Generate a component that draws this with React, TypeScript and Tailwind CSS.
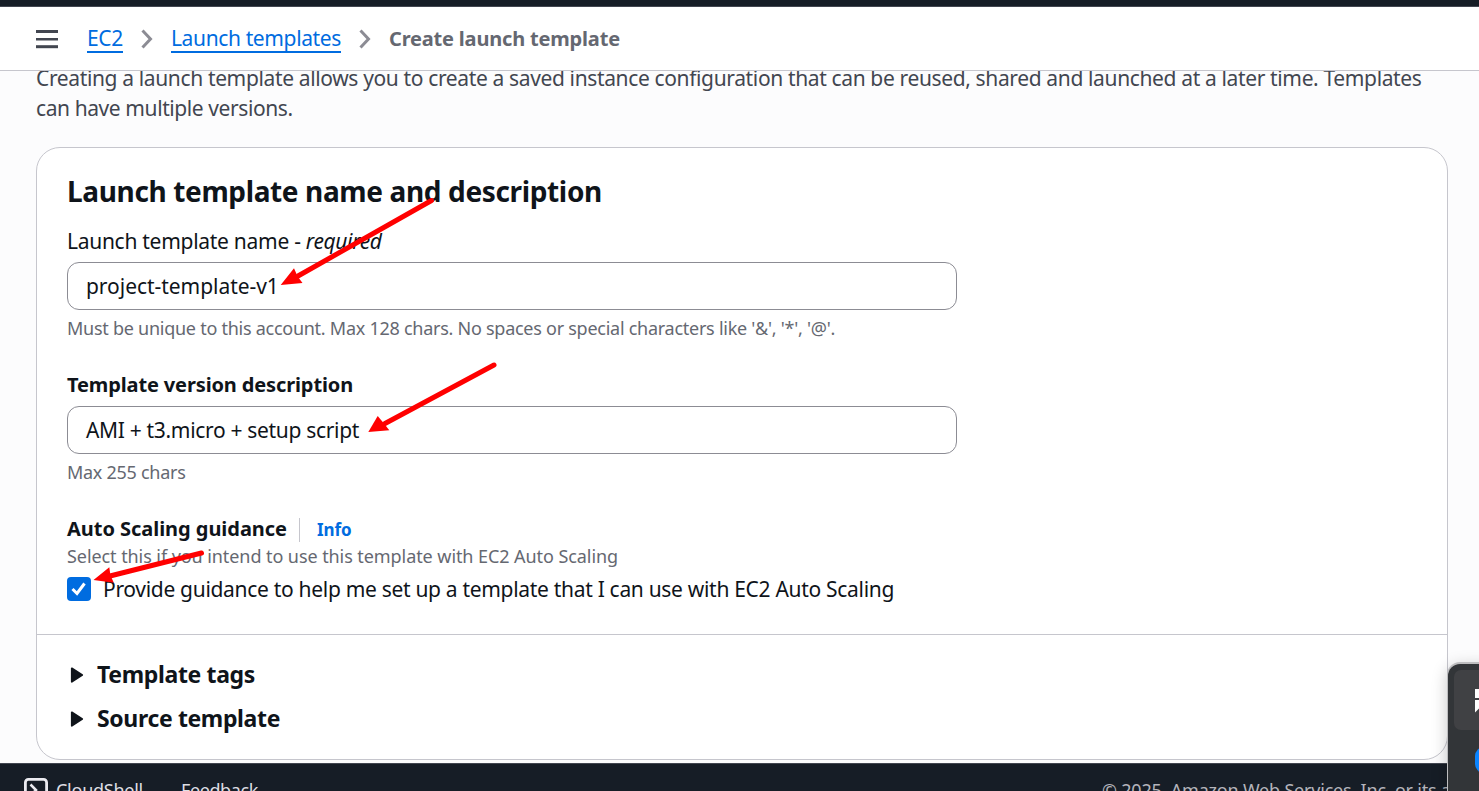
function Chevron() {
  return (
    <svg className="h-[20px] w-[12px] shrink-0" viewBox="0 0 12 20" fill="none" stroke="#8c8c94" strokeWidth="3">
      <path d="M1.5 1.5 L9.5 10 L1.5 18.5" />
    </svg>
  );
}

function Caret() {
  return (
    <svg className="mt-[2px] h-[16px] w-[14px] shrink-0" viewBox="0 0 14 16">
      <path d="M1.8 1.3 L12.2 8 L1.8 14.7 Z" fill="#0f141a" stroke="#0f141a" strokeWidth="1.8" strokeLinejoin="round" />
    </svg>
  );
}

function Header() {
  return (
    <header className="flex h-[64px] shrink-0 items-center border-b border-[#c6c6cd] bg-white pl-[36px] text-[21px] leading-[30px]">
      <svg className="mr-[29px] h-[20px] w-[22px]" viewBox="0 0 22 20" fill="#424650">
        <rect y="1" width="22" height="3" />
        <rect y="9" width="22" height="2.5" />
        <rect y="16.2" width="22" height="3" />
      </svg>
      <a className="h-[29px] border-b-2 border-[#006ce0] leading-[28px] tracking-[-0.33px] text-[#006ce0]">EC2</a>
      <span className="ml-[18px] mr-[18px] flex">
        <Chevron />
      </span>
      <a className="h-[29px] border-b-2 border-[#006ce0] leading-[28px] tracking-[-0.37px] text-[#006ce0]">Launch templates</a>
      <span className="ml-[18px] mr-[18px] flex">
        <Chevron />
      </span>
      <span className="text-[20px] font-bold tracking-[-0.18px] text-[#656871]">Create launch template</span>
    </header>
  );
}

function Arrows() {
  return (
    <svg className="pointer-events-none absolute inset-0" width="1479" height="791" fill="#ff0000" stroke="#ff0000">
      <g strokeWidth="5" strokeLinecap="round">
        <path d="M431.5 200.5 L298 276" />
        <path d="M494 365 L385 423.5" />
        <path d="M201.5 553 L110 576" />
      </g>
      <g stroke="none">
        <path d="M280.7 285 L294 268.3 L297.5 276.3 L302.5 283 Z" />
        <path d="M368.3 432 L377.7 416 L384 423.5 L389.3 430.3 Z" />
        <path d="M93.5 580 L109.3 567.3 L110.5 575.5 L113.8 582.8 Z" />
      </g>
    </svg>
  );
}

function FloatingPanel() {
  return (
    <div className="absolute top-[664px] left-[1448px] h-[128px] w-[31px] overflow-hidden rounded-tl-[12px] bg-[#323538] pt-[6px] pl-[6px]">
      <div className="h-[60px] w-[25px] rounded-l-[7px] bg-[#404144] pt-[19px] pl-[21px]">
        <svg width="4" height="24" fill="#ffffff">
          <path d="M0 0 H4 V9 H0 Z M0 11 H4 V19.5 L0 23.5 Z" />
        </svg>
      </div>
      <div className="mt-[17px] ml-[21px] h-[26px] w-[26px] rounded-[9px] bg-[#0a84ff]" />
    </div>
  );
}

export default function App() {
  return (
    <div className="relative flex h-[791px] w-[1479px] flex-col overflow-hidden bg-[#fcfcfd] font-['Noto_Sans',sans-serif] text-[21px] leading-[30px] whitespace-nowrap text-[#0f141a]">
      <div className="h-[7px] shrink-0 border-b border-[#424650] bg-[#161d26]" />
      <Header />

      <main className="h-[692px] shrink-0 overflow-hidden pr-[31px] pl-[36px]">
        <p className="-mt-[8px] text-[#424650]">
          <span className="block tracking-[-0.361px]">
            Creating a launch template allows you to create a saved instance configuration that can be reused, shared and launched at a later time. Templates
          </span>
          <span className="block tracking-[-0.41px]">can have multiple versions.</span>
        </p>

        <section className="mt-[24px] h-[613px] rounded-[24px] border border-[#c6c6cd] bg-white">
          <div className="px-[30px] pt-[25px]">
            <h2 className="text-[28px] leading-[36px] font-bold tracking-[-0.36px]">Launch template name and description</h2>

            <div className="mt-[17px] whitespace-pre">
              <span className="tracking-[-0.28px]">Launch template name - </span>
              <em className="tracking-[-0.36px]">required</em>
            </div>
            <div className="mt-[6px] flex h-[48px] w-[890px] items-center rounded-[12px] border border-[#8c8c94] bg-white pl-[18px] tracking-[-0.04px]">
              project-template-v1
            </div>
            <p className="mt-[6px] text-[18px] leading-[24px] tracking-[-0.262px] text-[#656871]">
              Must be unique to this account. Max 128 chars. No spaces or special characters like '&amp;', '*', '@'.
            </p>

            <div className="mt-[30px] text-[20px] font-bold tracking-[-0.13px]">Template version description</div>
            <div className="mt-[6px] flex h-[48px] w-[890px] items-center rounded-[12px] border border-[#8c8c94] bg-white pl-[18px] tracking-[-0.32px]">
              AMI + t3.micro + setup script
            </div>
            <p className="mt-[6px] text-[18px] leading-[24px] tracking-[-0.277px] text-[#656871]">Max 255 chars</p>

            <div className="mt-[30px] flex items-center">
              <span className="text-[20px] font-bold tracking-[-0.04px]">Auto Scaling guidance</span>
              <span className="mt-[2px] ml-[12px] h-[24px] border-l border-[#c6c6cd] pl-[17px] text-[17px] leading-[24px] font-bold tracking-[-0.1px] text-[#006ce0]">
                Info
              </span>
            </div>
            <p className="text-[18px] leading-[24px] tracking-[-0.073px] text-[#656871]">
              Select this if you intend to use this template with EC2 Auto Scaling
            </p>
            <div className="mt-[6px] flex items-center">
              <span className="flex h-[24px] w-[24px] items-center justify-center rounded-[4px] bg-[#006ce0]">
                <svg width="24" height="24" viewBox="0 0 24 24" fill="none" stroke="#ffffff" strokeWidth="3">
                  <path d="M5.5 12 L10 16.5 L17.5 6.5" />
                </svg>
              </span>
              <span className="ml-[12px] tracking-[-0.305px]">
                Provide guidance to help me set up a template that I can use with EC2 Auto Scaling
              </span>
            </div>
          </div>

          <div className="mt-[30px] border-t border-[#c6c6cd] pt-[24px] pl-[33px] text-[23px] font-bold">
            <div className="flex items-center">
              <Caret />
              <span className="ml-[13px] tracking-[-0.35px]">Template tags</span>
            </div>
            <div className="mt-[14px] flex items-center">
              <Caret />
              <span className="ml-[13px] tracking-[-0.36px]">Source template</span>
            </div>
          </div>
        </section>
      </main>

      <footer className="flex h-[52px] shrink-0 items-center border-t border-[#424650] bg-[#161d26] pr-[10px] pl-[24px] text-[18px] leading-[24px] text-[#dedee3]">
        <svg width="24" height="24" viewBox="0 0 24 24" fill="none" stroke="#ebebf0">
          <rect x="1.4" y="1.4" width="21.2" height="21.2" rx="3" strokeWidth="2.8" />
          <path d="M6.5 6.5 L12 12 L6.5 17.5" strokeWidth="2.5" />
        </svg>
        <span className="ml-[8px] tracking-[-0.26px]">CloudShell</span>
        <span className="ml-[38px] tracking-[-0.39px]">Feedback</span>
        <span className="ml-[844px] tracking-[-0.2px] text-[#b4b4bb]">© 2025, Amazon Web Services, Inc. or its a</span>
      </footer>

      <div className="absolute top-[662px] left-[1447px] h-[140px] w-[50px] rounded-tl-[13px] bg-[#bdbdbf] shadow-[0_4px_16px_rgba(0,0,0,0.22)]" />
      <FloatingPanel />
      <Arrows />
    </div>
  );
}
